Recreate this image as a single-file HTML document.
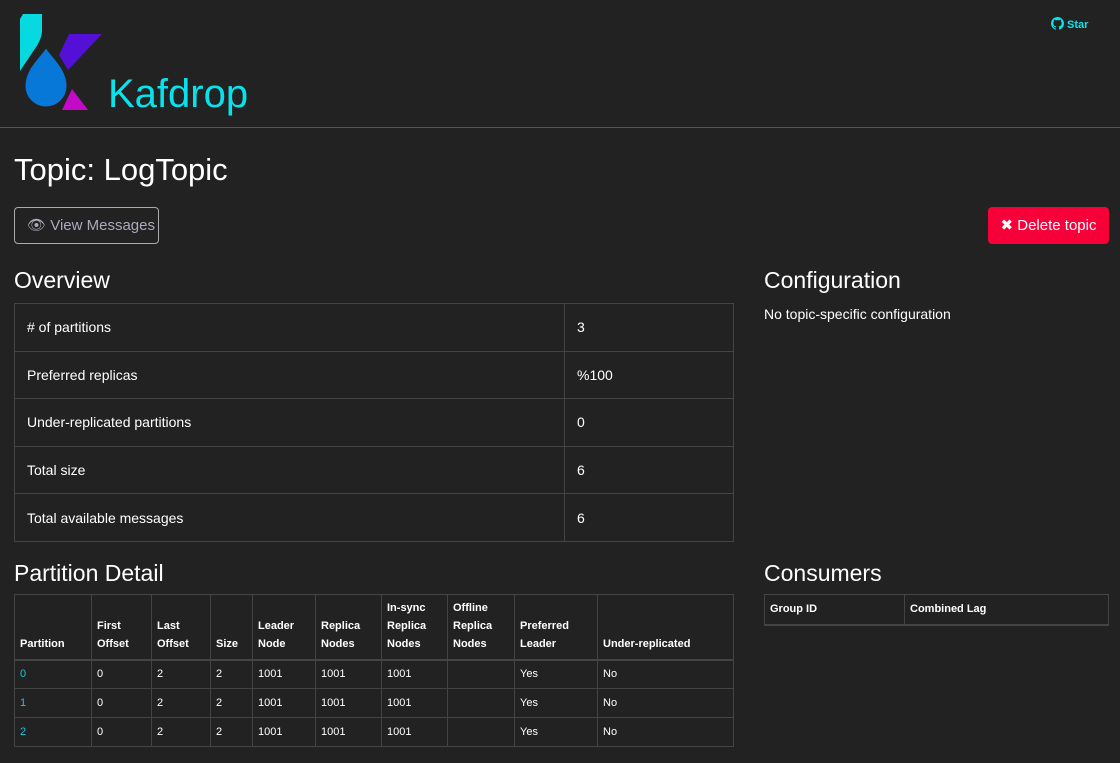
<!DOCTYPE html>
<html><head><style>
*{box-sizing:border-box;margin:0;padding:0}
body{width:1120px;height:763px;background:#222;color:#fff;font-family:"Liberation Sans",sans-serif;position:relative;overflow:hidden}
.abs{position:absolute}
table{border-collapse:collapse;position:absolute;table-layout:fixed}
td,th{border:1px solid #444;text-align:left}
.ov td{font-size:14px;padding:0 12px;height:47.6px}
.pd th{font-size:11px;font-weight:bold;vertical-align:bottom;padding:0 5px 6px;line-height:18px}
.pd td{font-size:11px;padding:0 5px;height:29px}
.pd thead th{border-bottom:2px solid #444}
a{color:#1ac6d9;text-decoration:none}
h2{position:absolute;font-size:23px;font-weight:normal}
</style></head><body>
<svg class="abs" style="left:0;top:0" width="110" height="115" viewBox="0 0 110 115">
<path d="M20 19 L23 14 H42 V32 Q41 41 34 50 L20 71 Z" fill="#07d9e0"/>
<path d="M69 34 H102 L68 70 L59 55 Z" fill="#5410d6"/>
<path d="M72 89 L88 110 H62 Z" fill="#c30ac9"/>
<path d="M46 46 C40 56 24 68 24 86 A22 22 0 0 0 68 86 C68 68 52 56 46 46 Z" fill="#0878d8" stroke="#222" stroke-width="3"/>
</svg>
<div class="abs" style="left:108px;top:72px;font-size:40px;color:#07e3ec">Kafdrop</div>
<div class="abs" style="left:1051px;top:17px;font-size:11px;font-weight:bold;color:#07e3ec">
<svg width="13" height="13" viewBox="0 0 16 16" style="vertical-align:-2px"><path fill="#07e3ec" d="M8 0C3.6 0 0 3.6 0 8c0 3.5 2.3 6.5 5.5 7.6.4.1.5-.2.5-.4v-1.4c-2.2.5-2.7-1-2.7-1-.4-.9-.9-1.2-.9-1.2-.7-.5.1-.5.1-.5.8.1 1.2.8 1.2.8.7 1.2 1.9.9 2.300.7.1-.5.3-.9.5-1.1-1.8-.2-3.6-.9-3.6-4 0-.9.3-1.6.8-2.1-.1-.2-.4-1 .1-2.1 0 0 .7-.2 2.2.8.6-.2 1.3-.3 2-.3s1.4.1 2 .3c1.5-1 2.2-.8 2.2-.8.4 1.1.2 1.9.1 2.1.5.6.8 1.3.8 2.1 0 3.1-1.900 3.7-3.6 3.9.3.3.5.8.5 1.5v2.2c0 .2.1.5.6.4C13.7 14.5 16 11.5 16 8c0-4.4-3.6-8-8-8z"/></svg> Star</div>
<div class="abs" style="left:0;top:127px;width:1120px;height:1px;background:#555"></div>
<div class="abs" style="left:14px;top:152px;font-size:31px">Topic: LogTopic</div>
<div class="abs" style="left:14px;top:207px;width:145px;height:37px;border:1px solid #aaa;border-radius:4px;color:#aab;font-size:15px;line-height:35px;padding-left:12px">&#x1F441;&#xFE0E; View Messages</div>
<div class="abs" style="left:988px;top:207px;width:121px;height:37px;background:#f7003a;border-radius:4px;font-size:15px;line-height:37px;text-align:center">✖ Delete topic</div>
<h2 style="left:14px;top:267px">Overview</h2>
<h2 style="left:764px;top:267px">Configuration</h2>
<div class="abs" style="left:764px;top:306px;font-size:14px">No topic-specific configuration</div>
<table class="ov" style="left:14px;top:303px;width:720px">
<col style="width:550px"><col>
<tr><td># of partitions</td><td>3</td></tr>
<tr><td>Preferred replicas</td><td>%100</td></tr>
<tr><td>Under-replicated partitions</td><td>0</td></tr>
<tr><td>Total size</td><td>6</td></tr>
<tr><td>Total available messages</td><td>6</td></tr>
</table>
<h2 style="left:14px;top:560px">Partition Detail</h2>
<h2 style="left:764px;top:560px">Consumers</h2>
<table class="pd" style="left:14px;top:594px;width:720px">
<col style="width:77px"><col style="width:60px"><col style="width:59px"><col style="width:42px"><col style="width:63px"><col style="width:66px"><col style="width:66px"><col style="width:67px"><col style="width:83px"><col>
<thead><tr style="height:65px"><th>Partition</th><th>First Offset</th><th>Last Offset</th><th>Size</th><th>Leader Node</th><th>Replica Nodes</th><th>In-sync Replica Nodes</th><th>Offline Replica Nodes</th><th>Preferred Leader</th><th>Under-replicated</th></tr></thead>
<tr><td><a>0</a></td><td>0</td><td>2</td><td>2</td><td>1001</td><td>1001</td><td>1001</td><td></td><td>Yes</td><td>No</td></tr>
<tr><td><a>1</a></td><td>0</td><td>2</td><td>2</td><td>1001</td><td>1001</td><td>1001</td><td></td><td>Yes</td><td>No</td></tr>
<tr><td><a>2</a></td><td>0</td><td>2</td><td>2</td><td>1001</td><td>1001</td><td>1001</td><td></td><td>Yes</td><td>No</td></tr>
</table>
<table class="pd" style="left:764px;top:594px;width:345px">
<col style="width:140px"><col>
<thead><tr style="height:30px"><th>Group ID</th><th>Combined Lag</th></tr></thead>
</table>
</body></html>
